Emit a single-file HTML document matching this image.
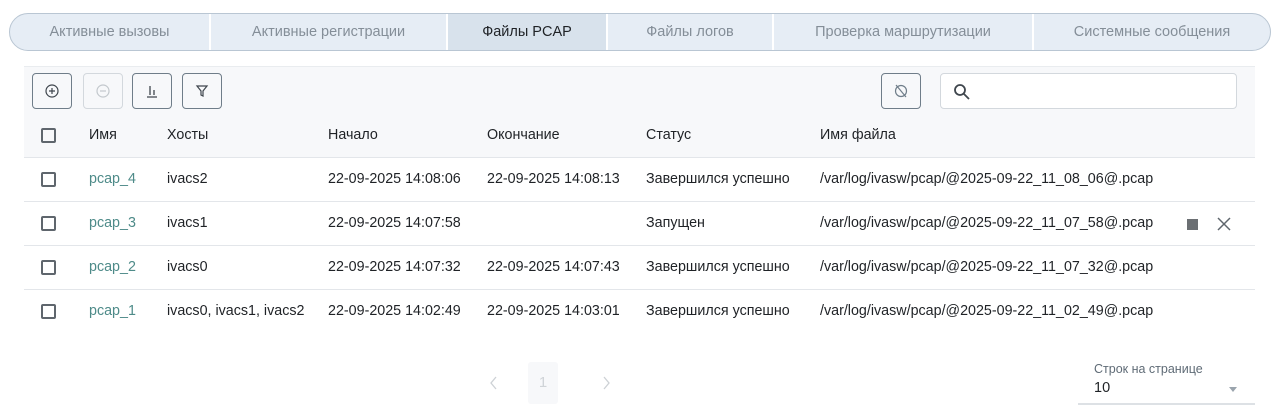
<!DOCTYPE html>
<html><head><meta charset="utf-8"><style>
*{box-sizing:border-box;margin:0;padding:0}
body{width:1280px;height:416px;background:#fff;font-family:"Liberation Sans","DejaVu Sans",sans-serif;font-size:14px;color:#1f2226;position:relative;overflow:hidden}
.tabs{position:absolute;left:9px;top:13px;width:1262px;height:38px;border:1px solid #b9c6d3;border-radius:19px;background:#e6edf5;overflow:hidden;display:flex}
.tab{height:100%;display:flex;align-items:center;justify-content:center;color:#848e98;font-size:14.5px;border-right:2px solid #fff}
.tab:last-child{border-right:none}
.tab.act{background:#d8e2ec;color:#1f2226}
.tb{position:absolute;left:24px;top:66px;width:1231px;height:48px;background:#f7f8fa;border-top:1px solid #e9ecef}
.btn{position:absolute;top:6px;width:40px;height:36px;border:1px solid #6f7d89;border-radius:4px;background:#f7f8fa;display:flex;align-items:center;justify-content:center}
.btn.dis{border-color:#d3d8dd}
.search{position:absolute;left:916px;top:6px;width:297px;height:36px;border:1px solid #d3d8dd;border-radius:4px;background:#fff}
.row{position:absolute;left:24px;width:1231px;height:44px;border-bottom:1px solid #e3e6ea}
.row.h{background:#f7f8fa}
.row.last{border-bottom:none}
.c{position:absolute;top:0;height:43px;line-height:43px;white-space:nowrap;font-size:14.3px}
.cb{position:absolute;left:17px;top:14px;width:15px;height:15px;border:2px solid #5f666d;border-radius:2px}
a{color:#4e8b89;text-decoration:none}
</style></head><body>
<div class="tabs">
<div class="tab" style="width:201px">Активные вызовы</div>
<div class="tab" style="width:237px">Активные регистрации</div>
<div class="tab act" style="width:160px">Файлы PCAP</div>
<div class="tab" style="width:166px">Файлы логов</div>
<div class="tab" style="width:260px">Проверка маршрутизации</div>
<div class="tab" style="flex:1">Системные сообщения</div>
</div>
<div class="tb">
<div class="btn" style="left:8px"><svg width="14" height="14" viewBox="0 0 14 14" fill="none" stroke="#3f464d" stroke-width="1.2"><circle cx="7" cy="7" r="6"/><path d="M7 4v6M4 7h6"/></svg></div>
<div class="btn dis" style="left:59px"><svg width="14" height="14" viewBox="0 0 14 14" fill="none" stroke="#c3c8cd" stroke-width="1.2"><circle cx="7" cy="7" r="6"/><path d="M4 7h6"/></svg></div>
<div class="btn" style="left:108px"><svg width="14" height="14" viewBox="0 0 14 14" fill="none" stroke="#3f464d" stroke-width="1.3"><path d="M5 2v9M9 6v5M2 13h10"/></svg></div>
<div class="btn" style="left:158px"><svg width="14" height="14" viewBox="0 0 14 14" fill="none" stroke="#3f464d" stroke-width="1.2"><path d="M2 2h10L8 7v5L6 11V7z"/></svg></div>
<div class="btn" style="left:857px"><svg width="16" height="16" viewBox="0 0 16 16" fill="none" stroke="#6f7d89" stroke-width="1.2"><circle cx="8" cy="8" r="5.5"/><path d="M3 2l10 12"/></svg></div>
<div class="search"><svg style="position:absolute;left:12px;top:9px" width="18" height="18" viewBox="0 0 18 18" fill="none" stroke="#3f464d" stroke-width="1.8"><circle cx="7" cy="7" r="5"/><path d="M11 11l5 5"/></svg></div>
</div>
<div class="row h" style="top:114px"><div class="cb"></div><div class="c" style="left:65px">Имя</div><div class="c" style="left:143px">Хосты</div><div class="c" style="left:304px">Начало</div><div class="c" style="left:463px">Окончание</div><div class="c" style="left:622px">Статус</div><div class="c" style="left:796px">Имя файла</div></div>
<div class="row" style="top:158px"><div class="cb"></div><div class="c" style="left:65px"><a>pcap_4</a></div><div class="c" style="left:143px">ivacs2</div><div class="c" style="left:304px">22-09-2025 14:08:06</div><div class="c" style="left:463px">22-09-2025 14:08:13</div><div class="c" style="left:622px">Завершился успешно</div><div class="c" style="left:796px">/var/log/ivasw/pcap/@2025-09-22_11_08_06@.pcap</div></div>
<div class="row" style="top:202px"><div class="cb"></div><div class="c" style="left:65px"><a>pcap_3</a></div><div class="c" style="left:143px">ivacs1</div><div class="c" style="left:304px">22-09-2025 14:07:58</div><div class="c" style="left:622px">Запущен</div><div class="c" style="left:796px">/var/log/ivasw/pcap/@2025-09-22_11_07_58@.pcap</div>
<div style="position:absolute;left:1163px;top:17px;width:11px;height:11px;background:#6b6f73"></div>
<svg style="position:absolute;left:1193px;top:15px" width="14" height="14" viewBox="0 0 14 14" stroke="#5f666d" stroke-width="1.5"><path d="M1 1l12 12M13 1L1 13"/></svg></div>
<div class="row" style="top:246px"><div class="cb"></div><div class="c" style="left:65px"><a>pcap_2</a></div><div class="c" style="left:143px">ivacs0</div><div class="c" style="left:304px">22-09-2025 14:07:32</div><div class="c" style="left:463px">22-09-2025 14:07:43</div><div class="c" style="left:622px">Завершился успешно</div><div class="c" style="left:796px">/var/log/ivasw/pcap/@2025-09-22_11_07_32@.pcap</div></div>
<div class="row last" style="top:290px"><div class="cb"></div><div class="c" style="left:65px"><a>pcap_1</a></div><div class="c" style="left:143px">ivacs0, ivacs1, ivacs2</div><div class="c" style="left:304px">22-09-2025 14:02:49</div><div class="c" style="left:463px">22-09-2025 14:03:01</div><div class="c" style="left:622px">Завершился успешно</div><div class="c" style="left:796px">/var/log/ivasw/pcap/@2025-09-22_11_02_49@.pcap</div></div>
<svg style="position:absolute;left:490px;top:376px" width="8" height="14" viewBox="0 0 8 14" fill="none" stroke="#cdd1d5" stroke-width="1.3"><path d="M6 1L1 7l5 6"/></svg>
<div style="position:absolute;left:528px;top:362px;width:30px;height:42px;background:#f7f8fa;border-radius:3px;color:#d0d4d8;text-align:center;line-height:42px;font-size:15px">1</div>
<svg style="position:absolute;left:602px;top:376px" width="8" height="14" viewBox="0 0 8 14" fill="none" stroke="#cdd1d5" stroke-width="1.3"><path d="M2 1l5 6-5 6"/></svg>
<div style="position:absolute;left:1094px;top:362px;font-size:12.5px;color:#5f6b76">Строк на странице</div>
<div style="position:absolute;left:1094px;top:380px;font-size:14.5px;color:#1f2226">10</div>
<div style="position:absolute;left:1229px;top:387px;width:0;height:0;border-left:4px solid transparent;border-right:4px solid transparent;border-top:5px solid #9aa4ad"></div>
<div style="position:absolute;left:1078px;top:403px;width:177px;height:2px;background:#dde1e5"></div>
</body></html>
